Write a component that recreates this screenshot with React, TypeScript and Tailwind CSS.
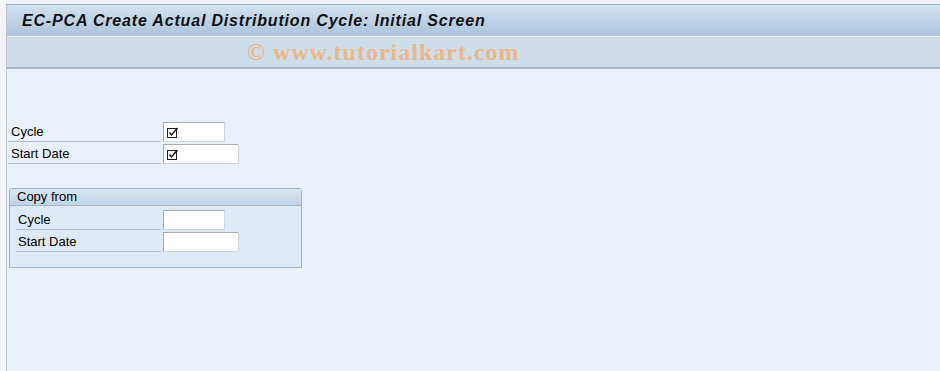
import React from 'react';

const CheckIcon = () => (
  <svg width="12" height="11" viewBox="0 0 12 11" className="block">
    <rect x="0.5" y="1.5" width="9" height="9" fill="none" stroke="#222" strokeWidth="1" />
    <path d="M2.5 5.5 L4.5 8 L10.5 1" fill="none" stroke="#111" strokeWidth="1.4" />
  </svg>
);

const Field: React.FC<{ label: string; width: string; check?: boolean; lineWidth: string; pad: string }> = ({ label, width, check, lineWidth, pad }) => (
  <div className="flex items-start h-[22px]">
    <div className={`${lineWidth} ${pad} h-[20px] border-b border-[#b6c0cb] text-[13px] leading-[20px] text-black`}>{label}</div>
    <div className={`${width} h-[20px] ml-[2px] bg-white border border-[#a9adb2] border-b-[#d3d6da] border-r-[#d3d6da] flex items-center pl-[3px]`}>
      {check && <CheckIcon />}
    </div>
  </div>
);

export default function App() {
  return (
    <div className="w-[940px] h-[371px] overflow-hidden bg-[#f2f4f9] font-['Liberation_Sans',Arial,sans-serif]">
      <div className="h-[5px] bg-[#eef1f7] border-b border-[#a5adb8] ml-[6px]" />
      <div className="ml-[6px] border-l border-[#bcc6d1] h-[366px] flex flex-col">
        {/* Title */}
        <div className="h-[31px] bg-gradient-to-b from-[#d3e2ef] to-[#acc3db] flex items-center pl-[15px]">
          <h1 className="text-[16px] font-bold italic text-[#111] tracking-[0.82px]">EC-PCA Create Actual Distribution Cycle: Initial Screen</h1>
        </div>
        {/* Toolbar */}
        <div className="h-[33px] bg-[#cedce8] border-t border-[#eef3f8] border-b-2 border-b-[#a7b2bd] flex items-center">
          <span className="ml-[240px] text-[24px] font-bold text-[#e9b98c] font-['Liberation_Serif',serif] tracking-[1px]">© www.tutorialkart.com</span>
        </div>
        {/* Body */}
        <div className="flex-1 bg-[#e9f0f8] pt-[53px] pl-[1px]">
          <Field label="Cycle" width="w-[62px]" check lineWidth="w-[153px]" pad="pl-[3px]" />
          <Field label="Start Date" width="w-[76px]" check lineWidth="w-[153px]" pad="pl-[3px]" />
          <div className="mt-[22px] ml-[1px] w-[293px] h-[80px] border border-[#9db4cc] rounded-t-[3px] bg-[#dfe9f3] flex flex-col">
            <div className="h-[17px] bg-gradient-to-b from-[#dce7f2] to-[#bfd3e8] border-b border-[#9db4cc] text-[13px] leading-[16px] pl-[7px] text-black">Copy from</div>
            <div className="pt-[4px] pl-[6px]">
              <Field label="Cycle" width="w-[62px]" lineWidth="w-[145px]" pad="pl-[2px]" />
              <Field label="Start Date" width="w-[76px]" lineWidth="w-[145px]" pad="pl-[2px]" />
            </div>
          </div>
        </div>
      </div>
    </div>
  );
}
